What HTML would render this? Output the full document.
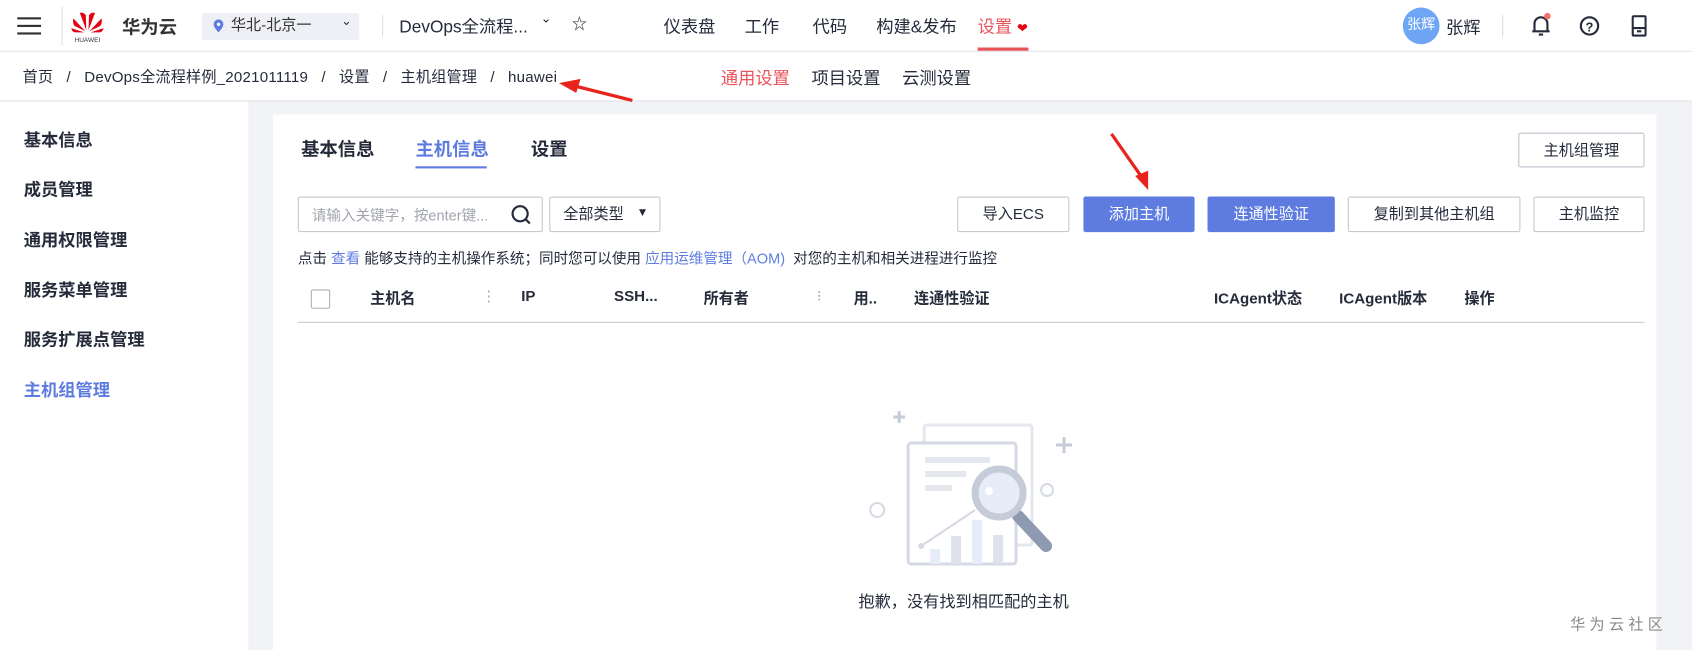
<!DOCTYPE html>
<html><head><meta charset="utf-8"><style>
html,body{margin:0;padding:0;width:1692px;height:650px;overflow:hidden;background:#f2f3f7;}
#w{position:absolute;left:0;top:0;width:1568px;height:602px;transform:scale(1.0791,1.0797);transform-origin:0 0;font-family:"Liberation Sans","Noto Sans CJK SC",sans-serif;color:#252b3a;background:#f2f3f7;}
.a{position:absolute;white-space:nowrap;}
.btn{position:absolute;height:32px;border:1px solid #c4c8d0;border-radius:2px;background:#fff;font-size:14px;line-height:32px;text-align:center;box-sizing:border-box;color:#252b3a}
.pri{background:#5e7ce0;border-color:#5e7ce0;color:#fff}
.side{position:absolute;left:22px;font-size:16px;font-weight:bold;color:#252b3a}
.th{position:absolute;top:266px;font-size:14px;font-weight:bold;color:#252b3a;white-space:nowrap}
</style></head><body><div id="w">
<div class="a" style="left:0;top:0;width:1568px;height:47px;background:#fff;border-bottom:1px solid #dfe1e6"></div>
<div class="a" style="left:16px;top:16px;width:22px;height:2px;background:#333;box-shadow:0 7px 0 #333,0 14px 0 #333"></div>
<div class="a" style="left:57px;top:6px;width:1px;height:36px;background:#e0e0e0"></div>
<svg class="a" style="left:64px;top:8px" width="34" height="34" viewBox="0 0 34 34">
<g fill="#e60012"><path d="M16 20 L10 4 Q13 3 15.5 6Z"/><path d="M18 20 L24 4 Q21 3 18.5 6Z"/><path d="M15 21 L4 9 Q3 13 5 16Z"/><path d="M19 21 L30 9 Q31 13 29 16Z"/><path d="M14 22 L2 18 Q3 22 6 22Z"/><path d="M20 22 L32 18 Q31 22 28 22Z"/></g>
<text x="17" y="31" font-size="6" text-anchor="middle" fill="#333" font-family="Liberation Sans">HUAWEI</text></svg>
<div class="a" style="left:113px;top:11px;font-size:17px;font-weight:bold;color:#333">华为云</div>
<div class="a" style="left:187px;top:12px;width:146px;height:25px;background:#eef0f5;border-radius:2px"></div>
<svg class="a" style="left:197px;top:17px" width="11" height="14"><path d="M5.5 1a4.5 4.5 0 0 1 4.5 4.5c0 3-4.5 7.5-4.5 7.5S1 8.5 1 5.5A4.5 4.5 0 0 1 5.5 1z" fill="#5e7ce0"/><circle cx="5.5" cy="5.5" r="1.6" fill="#fff"/></svg>
<div class="a" style="left:214px;top:13px;font-size:14px;color:#333">华北-北京一</div>
<div class="a" style="left:316px;top:12px;font-size:12px;color:#333">&#8964;</div>
<div class="a" style="left:354px;top:14px;width:1px;height:20px;background:#e0e0e0"></div>
<div class="a" style="left:370px;top:11px;font-size:16px;color:#252b3a">DevOps全流程...</div>
<div class="a" style="left:501px;top:10px;font-size:12px">&#8964;</div>
<div class="a" style="left:530px;top:12px;font-size:14px">☆</div>
<div class="a" style="left:615px;top:11px;font-size:16px">仪表盘</div>
<div class="a" style="left:690px;top:11px;font-size:16px">工作</div>
<div class="a" style="left:753px;top:11px;font-size:16px">代码</div>
<div class="a" style="left:812px;top:11px;font-size:16px">构建&amp;发布</div>
<div class="a" style="left:906px;top:11px;font-size:16px;color:#e9545b">设置 <span style="font-size:12px;color:#e60012">❤</span></div>
<div class="a" style="left:906px;top:44px;width:47px;height:3px;background:#e9545b"></div>
<div class="a" style="left:1300px;top:7px;width:34px;height:34px;border-radius:50%;background:#6ea6f5;color:#fff;font-size:13px;line-height:32px;text-align:center">张辉</div>
<div class="a" style="left:1340px;top:12px;font-size:16px">张辉</div>
<div class="a" style="left:1392px;top:14px;width:1px;height:20px;background:#ddd"></div>
<svg class="a" style="left:1417px;top:12px" width="22" height="24"><path d="M5 17V10a6 6 0 0 1 12 0v7M3 17h16M9 20h4" stroke="#252b3a" stroke-width="2" fill="none"/><circle cx="17" cy="3" r="3" fill="#f66f6a"/></svg>
<svg class="a" style="left:1463px;top:14px" width="20" height="20"><circle cx="10" cy="10" r="8" stroke="#252b3a" stroke-width="2" fill="none"/><text x="10" y="15" font-size="12" font-weight="bold" text-anchor="middle" font-family="Liberation Sans" fill="#252b3a">?</text></svg>
<svg class="a" style="left:1512px;top:14px" width="14" height="20"><rect x="1" y="1" width="12" height="18" rx="1" stroke="#252b3a" stroke-width="2" fill="none"/><path d="M1 12h12M5 15h4" stroke="#252b3a" stroke-width="2"/></svg>
<div class="a" style="left:0;top:48px;width:1568px;height:45px;background:#fff;border-bottom:1px solid #dfe1e6"></div>
<div class="a" style="left:21px;top:61px;font-size:14px;color:#252b3a;letter-spacing:0.2px">首页 &nbsp;&nbsp;/&nbsp;&nbsp; DevOps全流程样例_2021011119 &nbsp;&nbsp;/&nbsp;&nbsp; 设置 &nbsp;&nbsp;/&nbsp;&nbsp; 主机组管理 &nbsp;&nbsp;/&nbsp;&nbsp; huawei</div>
<div class="a" style="left:668px;top:59px;font-size:16px;color:#e9545b">通用设置</div>
<div class="a" style="left:752px;top:59px;font-size:16px">项目设置</div>
<div class="a" style="left:836px;top:59px;font-size:16px">云测设置</div>
<svg class="a" style="left:0;top:0;pointer-events:none;z-index:5" width="1568" height="602">
<path d="M586 93 L534 80" stroke="#e8231b" stroke-width="3"/><path d="M518 77 L538 73 L534 86Z" fill="#e8231b"/>
<path d="M1030 124 L1058 164" stroke="#e8231b" stroke-width="3"/><path d="M1064 176 L1052 163 L1064 158Z" fill="#e8231b"/>
</svg>
<div class="a" style="left:0;top:94px;width:230px;height:508px;background:#fff"></div>
<div class="side" style="top:116px">基本信息</div>
<div class="side" style="top:162px">成员管理</div>
<div class="side" style="top:209px">通用权限管理</div>
<div class="side" style="top:255px">服务菜单管理</div>
<div class="side" style="top:301px">服务扩展点管理</div>
<div class="side" style="top:348px;color:#5e7ce0">主机组管理</div>
<div class="a" style="left:253px;top:106px;width:1282px;height:496px;background:#fff"></div>
<div class="a" style="left:279px;top:124px;font-size:17px;font-weight:bold">基本信息</div>
<div class="a" style="left:385px;top:124px;font-size:17px;font-weight:bold;color:#5e7ce0">主机信息</div>
<div class="a" style="left:385px;top:154px;width:66px;height:2px;background:#5e7ce0"></div>
<div class="a" style="left:492px;top:124px;font-size:17px;font-weight:bold">设置</div>
<div class="btn" style="left:1407px;top:123px;width:117px">主机组管理</div>
<div class="a" style="left:276px;top:182px;width:227px;height:33px;border:1px solid #c4c8d0;box-sizing:border-box;border-radius:2px"></div>
<div class="a" style="left:289px;top:188px;font-size:13.5px;color:#a0a4ad">请输入关键字，按enter键...</div>
<svg class="a" style="left:473px;top:189px" width="20" height="20"><circle cx="9" cy="9" r="7" stroke="#252b3a" stroke-width="2" fill="none"/><path d="M14 14l4 4" stroke="#252b3a" stroke-width="2"/></svg>
<div class="a" style="left:509px;top:182px;width:103px;height:33px;border:1px solid #c4c8d0;box-sizing:border-box;border-radius:2px"></div>
<div class="a" style="left:522px;top:188px;font-size:14px">全部类型</div>
<div class="a" style="left:590px;top:191px;font-size:11px">▼</div>
<div class="btn" style="left:887px;top:182px;width:104px;height:33px;line-height:31px">导入ECS</div>
<div class="btn pri" style="left:1004px;top:182px;width:103px;height:33px;line-height:31px">添加主机</div>
<div class="btn pri" style="left:1119px;top:182px;width:118px;height:33px;line-height:31px">连通性验证</div>
<div class="btn" style="left:1249px;top:182px;width:160px;height:33px;line-height:31px">复制到其他主机组</div>
<div class="btn" style="left:1421px;top:182px;width:103px;height:33px;line-height:31px">主机监控</div>
<div class="btn" style="left:1407px;top:123px;width:117px;line-height:30px">主机组管理</div>
<div class="a" style="left:276px;top:228px;font-size:13.5px">点击 <span style="color:#5e7ce0">查看</span> 能够支持的主机操作系统；同时您可以使用 <span style="color:#5e7ce0">应用运维管理（AOM)</span> &nbsp;对您的主机和相关进程进行监控</div>
<div class="a" style="left:288px;top:268px;width:18px;height:18px;border:1px solid #adb0b8;box-sizing:border-box;border-radius:2px"></div>
<div class="th" style="left:343px">主机名</div>
<div class="th" style="left:446px;color:#aaa;font-weight:normal">⋮</div>
<div class="th" style="left:483px">IP</div>
<div class="th" style="left:569px">SSH...</div>
<div class="th" style="left:652px">所有者</div>
<div class="th" style="left:757px;color:#aaa;font-weight:normal">⁝</div>
<div class="th" style="left:791px">用..</div>
<div class="th" style="left:847px">连通性验证</div>
<div class="th" style="left:1125px">ICAgent状态</div>
<div class="th" style="left:1241px">ICAgent版本</div>
<div class="th" style="left:1357px">操作</div>
<div class="a" style="left:276px;top:298px;width:1248px;height:1px;background:#c4c8d0"></div>
<svg class="a" style="left:760px;top:352px" width="278" height="250" viewBox="820 380 300 270">
<rect x="924" y="425" width="108" height="120" rx="3" fill="#fff" stroke="#e4e7ee" stroke-width="3"/>
<rect x="908" y="443" width="108" height="121" rx="3" fill="#fff" stroke="#d5d9e3" stroke-width="3"/>
<rect x="925" y="457" width="65" height="6" fill="#e4e7ee"/><rect x="925" y="471" width="41" height="6" fill="#e4e7ee"/><rect x="925" y="485" width="27" height="6" fill="#e4e7ee"/>
<rect x="930" y="549" width="10" height="15" fill="#e6edf8"/><rect x="951" y="536" width="10" height="28" fill="#dfe2ea"/><rect x="972" y="520" width="10" height="44" fill="#e6edf8"/><rect x="993" y="535" width="10" height="29" fill="#dfe2ea"/>
<path d="M921 546 L975 510" stroke="#d5d9e3" stroke-width="2"/><circle cx="921" cy="546" r="3" fill="#d5d9e3"/>
<path d="M899 411v12M893 417h12M1064 437v16M1056 445h16" stroke="#c5cbd8" stroke-width="3"/>
<circle cx="877" cy="510" r="7" fill="none" stroke="#d5d9e3" stroke-width="2"/><circle cx="1047" cy="490" r="6" fill="none" stroke="#d5d9e3" stroke-width="2"/>
<path d="M1018 516 L1046 546" stroke="#8e9ab0" stroke-width="12" stroke-linecap="round"/>
<circle cx="999" cy="493" r="24" fill="#e6edf8" stroke="#c5cbd8" stroke-width="7"/>
<circle cx="989" cy="491" r="4" fill="#fff"/>
</svg>
<div class="a" style="left:0;width:1786px;top:546px;font-size:15px;text-align:center;color:#252b3a">抱歉，没有找到相匹配的主机</div>
<div class="a" style="left:1455px;top:568px;font-size:14px;color:#888;letter-spacing:4px">华为云社区</div>
</div></body></html>
